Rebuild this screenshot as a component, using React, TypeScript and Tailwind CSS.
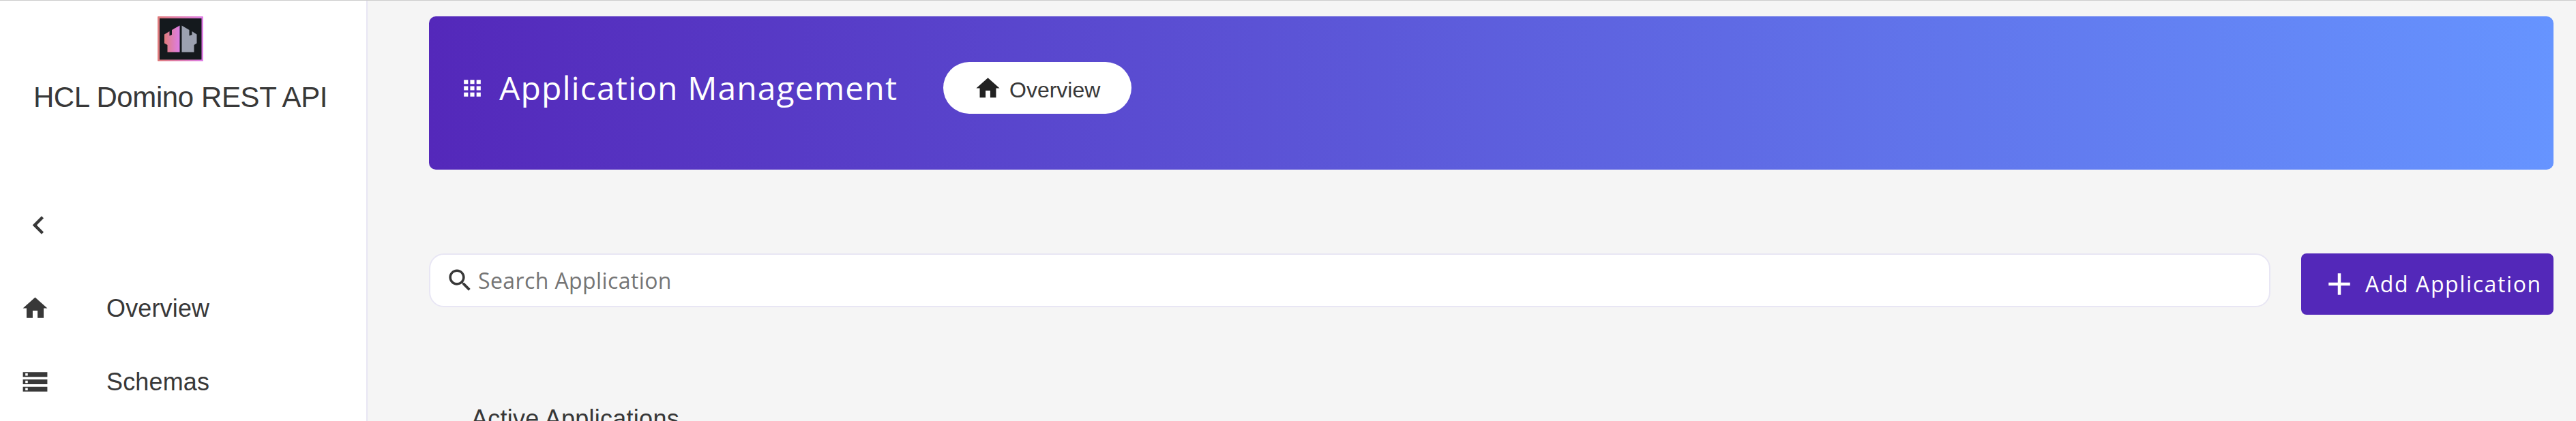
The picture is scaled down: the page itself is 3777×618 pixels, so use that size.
import React from "react";

const ICONS = {
  home: "M10 20v-6h4v6h5v-8h3L12 3 2 12h3v8z",
  storage: "M2 20h20v-4H2v4zm2-3h2v2H4v-2zM2 4v4h20V4H2zm4 3H4V5h2v2zm-4 7h20v-4H2v4zm2-3h2v2H4v-2z",
  chevronLeft: "M15.41 7.41 14 6l-6 6 6 6 1.41-1.41L10.83 12z",
  apps: "M4 8h4V4H4v4zm6 12h4v-4h-4v4zm-6 0h4v-4H4v4zm0-6h4v-4H4v4zm6 0h4v-4h-4v4zm6-10v4h4V4h-4zm-6 4h4V4h-4v4zm6 6h4v-4h-4v4zm0 6h4v-4h-4v4z",
  search:
    "M15.5 14h-.79l-.28-.27C15.41 12.59 16 11.11 16 9.5 16 5.91 13.09 3 9.5 3S3 5.91 3 9.5 5.91 16 9.5 16c1.61 0 3.09-.59 4.23-1.57l.27.28v.79l5 4.99L20.49 19l-4.99-5zm-6 0C7.01 14 5 11.99 5 9.5S7.01 5 9.5 5 14 7.01 14 9.5 11.99 14 9.5 14z",
  add: "M19 13h-6v6h-2v-6H5v-2h6V5h2v6h6v2z",
};

function Icon({ name, className }: { name: keyof typeof ICONS; className: string }) {
  return (
    <svg viewBox="0 0 24 24" fill="currentColor" className={`block shrink-0 ${className}`}>
      <path d={ICONS[name]} />
    </svg>
  );
}

function Logo() {
  return (
    <svg viewBox="0 0 67 66" className="block h-[66px] w-[67px]">
      <defs>
        <linearGradient id="frame" x1="0" x2="1" y1="0" y2="0">
          <stop offset="0" stopColor="#e07c7c" />
          <stop offset="1" stopColor="#de7ee6" />
        </linearGradient>
      </defs>
      <rect width="67" height="66" rx="1" fill="url(#frame)" />
      <rect x="3" y="3" width="61.5" height="60.5" fill="#14191d" />
      <path d="M32.5 13.5v39H14.5V42L10 39.5V26.5L17.5 22v6.5L21 27V20z" fill="url(#frame)" />
      <path d="M35.5 13.5v39H53.5V42L57.5 39.5V26.5L50.5 22v5L46.5 28.5V20z" fill="#9ba1b0" />
    </svg>
  );
}

function NavItem({ icon, label }: { icon: "home" | "storage"; label: string }) {
  return (
    <li className="flex h-[108px] items-center pl-[30px]">
      <Icon name={icon} className="size-[43px]" />
      <span className="mt-[2px] ml-[83px] text-[36px] leading-[42px] tracking-[0.15px]">{label}</span>
    </li>
  );
}

export default function App() {
  return (
    <div className="flex h-[618px] w-[3777px] overflow-hidden border-t border-[#cccccc] bg-[#f5f5f5] font-['Liberation_Sans',Arial,sans-serif] text-[#383838]">
      <aside className="w-[539px] shrink-0 border-r-2 border-[#e8e6f4] bg-white">
        <div className="flex flex-col items-center pt-[23px] pr-[8px]">
          <Logo />
          <h1 className="mt-[29px] text-[42px] leading-[48px] tracking-[-0.4px] whitespace-nowrap">HCL Domino REST API</h1>
        </div>
        <button className="mt-[137px] ml-[30px] block">
          <Icon name="chevronLeft" className="size-[53px]" />
        </button>
        <ul className="mt-[41px]">
          <NavItem icon="home" label="Overview" />
          <NavItem icon="storage" label="Schemas" />
        </ul>
      </aside>

      <main className="flex-1 pt-[23px] pr-[33px] pl-[90px]">
        <header className="flex h-[225px] items-start rounded-[10px] bg-[linear-gradient(90deg,#5428ba_0%,#6694ff_100%)] pl-[45px]">
          <Icon name="apps" className="mt-[87px] size-[37px] text-white" />
          <h2 className="mt-[72px] ml-[21px] w-[651px] font-['Open_Sans',sans-serif] text-[48px] leading-[66px] tracking-[1.1px] whitespace-nowrap text-white">
            Application Management
          </h2>
          <button className="mt-[67px] flex h-[76px] w-[276px] items-center rounded-full bg-white pl-[45px]">
            <Icon name="home" className="size-[41px] text-[#222222]" />
            <span className="mt-[5px] ml-[11px] text-[32px] leading-[36px]">Overview</span>
          </button>
        </header>

        <div className="mt-[123px] flex items-start gap-[45px]">
          <label className="flex h-[79px] flex-1 items-center rounded-[22px] border-2 border-[#e8e6f4] bg-white pl-[22px]">
            <Icon name="search" className="size-[43px]" />
            <input
              placeholder="Search Application"
              className="ml-[5px] h-[60px] flex-1 bg-transparent font-['Open_Sans',sans-serif] text-[32px] tracking-[0.4px] outline-none placeholder:text-[#757575]"
            />
          </label>
          <button className="flex h-[90px] w-[370px] items-center rounded-[8px] bg-[#5328b9] pl-[29px] text-white">
            <Icon name="add" className="size-[54px]" />
            <span className="ml-[11px] font-['Open_Sans',sans-serif] text-[32px] leading-[44px] tracking-[1.6px] whitespace-nowrap">
              Add Application
            </span>
          </button>
        </div>

        <h3 className="mt-[132px] ml-[62px] text-[36px] leading-[42px] tracking-[0.25px] whitespace-nowrap">
          Active Applications
        </h3>
      </main>
    </div>
  );
}
